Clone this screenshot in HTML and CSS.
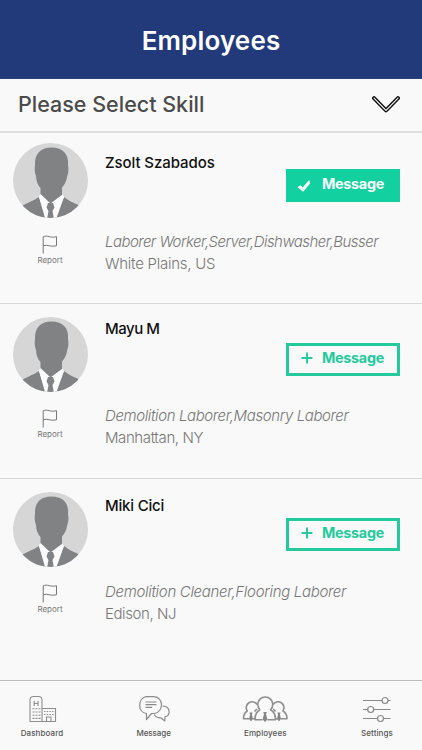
FILE: index.html
```html
<!DOCTYPE html>
<html lang="en">
<head>
<meta charset="utf-8">
<title>Employees</title>
<link rel="stylesheet" href="styles.css">
</head>
<body>
<svg class="defs" aria-hidden="true">
  <defs>
    <clipPath id="round"><circle cx="37.5" cy="37.5" r="37.5"/></clipPath>
    <symbol id="avatar" viewBox="0 0 75 75">
      <g clip-path="url(#round)">
        <rect width="75" height="75" fill="#d6d6d6"/>
        <path d="M26.500 52 L37.500 60 L50 52 L56 75 H22Z" fill="#fbfbfb"/>
        <path d="M22 22 C21.500 11 27 4.500 38.500 4.500 C50 4.500 56 11 55 22 C56 28 55 31 54 34 C53.500 38 51.500 42 49 44.500 L49 54 L37.500 61 L27.500 53 V45 C24.500 42 23 37 23 33 C21.500 29 21.500 26 22 22Z" fill="#808284"/>
        <path d="M26 54 C20 58 14 60 9.500 62.500 V75 H33 L29 63Z M51 54 C55 57 60 60 65.500 62 V75 H42 L47 63Z" fill="#808284"/>
        <path d="M27.500 51 L37.500 60.500 L33.500 64 V75 H32 L26 54Z M49.500 51.500 L37.500 60.500 L41.500 64 V75 H43.500 L51 54Z" fill="#fbfbfb"/>
        <path d="M35 60 H40 L41.500 64.500 L39.500 68 L40.800 75 H34.200 L35.500 68 L33.500 64.500Z" fill="#808284"/>
      </g>
    </symbol>
    <symbol id="flag" viewBox="0 0 16 19">
      <path d="M1.2 18.5 V1.8 C5.5 -.3 8.5 3.5 14.5 1.7 V10.8 C9 12.6 5.5 8.9 1.2 10.8" fill="none" stroke="#777" stroke-width="1"/>
    </symbol>
    <symbol id="plus" viewBox="0 0 12 12">
      <path d="M6 .6 V11.4 M.6 6 H11.4" fill="none" stroke="#24c99c" stroke-width="1.9"/>
    </symbol>
  </defs>
</svg>
<header class="header"><h1 class="title">Employees</h1></header>
<div class="select">
  <span class="select-label">Please Select Skill</span>
  <svg class="chevron" viewBox="0 0 28 17"><path d="M2 2.2 L14 14.4 L26 2.2" fill="none" stroke="#111" stroke-width="4" stroke-linecap="round" stroke-linejoin="round"/><path d="M2 2.2 L14 14.4 L26 2.2" fill="none" stroke="#f9f9f9" stroke-width="1.1" stroke-linecap="round"/></svg>
</div>
<main class="list">
  <article class="row row-first">
    <div class="side">
      <svg class="avatar"><use href="#avatar"/></svg>
      <svg class="flag"><use href="#flag"/></svg>
      <span class="report">Report</span>
    </div>
    <div class="info">
      <div class="top">
        <h2 class="name n1">Zsolt Szabados</h2>
        <div class="button filled"><svg class="check" viewBox="0 0 14 12"><path d="M.5 7.2 L3.4 5.2 L5.7 7.5 L11.6 .6 L12.8 .8 V3.8 L6.2 11.7Z" fill="#fff"/></svg><span class="button-label">Message</span></div>
      </div>
      <p class="skills s1">Laborer Worker,Server,Dishwasher,Busser</p>
      <p class="place p1">White Plains, US</p>
    </div>
  </article>
  <article class="row row-second">
    <div class="side">
      <svg class="avatar"><use href="#avatar"/></svg>
      <svg class="flag"><use href="#flag"/></svg>
      <span class="report">Report</span>
    </div>
    <div class="info">
      <div class="top">
        <h2 class="name n2">Mayu M</h2>
        <div class="button"><svg class="plus"><use href="#plus"/></svg><span class="button-label">Message</span></div>
      </div>
      <p class="skills s2">Demolition Laborer,Masonry Laborer</p>
      <p class="place p2">Manhattan, NY</p>
    </div>
  </article>
  <article class="row row-third">
    <div class="side">
      <svg class="avatar"><use href="#avatar"/></svg>
      <svg class="flag"><use href="#flag"/></svg>
      <span class="report">Report</span>
    </div>
    <div class="info">
      <div class="top">
        <h2 class="name n3">Miki Cici</h2>
        <div class="button"><svg class="plus"><use href="#plus"/></svg><span class="button-label">Message</span></div>
      </div>
      <p class="skills s3">Demolition Cleaner,Flooring Laborer</p>
      <p class="place p3">Edison, NJ</p>
    </div>
  </article>
</main>
<nav class="tabs">
  <div class="tab tab-dashboard">
    <svg class="tab-icon" viewBox="0 0 50 28" fill="none" stroke="#8e8e8e" stroke-width="1.1">
      <path d="M13 26.5 V5 Q13 1.5 16.500 1.500 H21.500 Q25 1.500 25 5 V26.500Z M25 13.500 H38.500 V26.500 H25 M29.500 26.500 V22 H34 V26.500"/>
      <path d="M17.200 6 V11 M21 6 V11 M17.200 8.500 H21" stroke-width="1.200"/>
      <path d="M15.500 13.800 H23.500 M15.500 17 H23.500 M15.500 20.200 H23.500 M15.500 23.400 H23.500" stroke-dasharray="2 1"/>
      <path d="M27 16.500 H37 M27 19.500 H37" stroke-dasharray="1.500 1.200"/>
    </svg>
    <span class="tab-label t1">Dashboard</span>
  </div>
  <div class="tab tab-message">
    <svg class="tab-icon" viewBox="0 0 50 28" fill="none" stroke="#8b8b8b" stroke-width="1.2" stroke-linejoin="round" stroke-linecap="round">
      <path d="M17.500 18.500 C8.500 17.500 8.500 3.500 17 1.700 H25 C35 2 35 17.500 25 18.500 H22.500 L17.500 24.500Z"/>
      <path d="M17 7 H27 M17 9.700 H27 M17 12.400 H22.500"/>
      <path d="M34 11 C41.500 11.500 42 20.500 36 21.800 L35.800 26 L31.700 22.800 C28.500 22.800 26.700 22 25.500 20"/>
    </svg>
    <span class="tab-label t2">Message</span>
  </div>
  <div class="tab tab-employees">
    <svg class="tab-icon" viewBox="0 0 50 28" fill="none" stroke="#8e8e8e" stroke-width="1.600" stroke-linejoin="round">
      <path d="M20 14.800 A7.500 7.500 0 1 1 30.500 14.800 C34 16.500 35.500 20 35.500 24.700 H27.500 M20 14.800 C16.500 16.500 15 20 15 24.700 H22.500"/>
      <path d="M17.200 9.500 A5.500 5.500 0 1 0 7.200 16 C4 18 3.500 21 3.500 23.700 H9.500 M13 23.700 H15 M14.500 16.500 L17 14"/>
      <path d="M33 9.500 A5.500 5.500 0 1 1 43 16 C46.500 18 47 21 47 23.700 H41 M35.500 23.700 H37.500 M35.500 16.500 L33.200 14"/>
      <path d="M23.200 17 H26.800 L26 19 L27.400 24.500 L25 27 L22.600 24.500 L24 19Z M9.400 17.500 H12.600 L11.900 19.500 L13 24 L11 26.300 L9 24 L10.100 19.500Z M37.400 17.500 H40.600 L39.900 19.500 L41 24 L39 26.300 L37 24 L38.100 19.500Z" fill="#858585" stroke="none"/>
    </svg>
    <span class="tab-label t3">Employees</span>
  </div>
  <div class="tab tab-settings">
    <svg class="tab-icon" viewBox="0 0 50 28" fill="#f9f9f9" stroke="#8a8a8a" stroke-width="1.200">
      <path d="M11 5.500 H38.500 M11 14.500 H38.500 M11 23.500 H38.500"/>
      <circle cx="33" cy="5.500" r="3"/><circle cx="18.700" cy="14.500" r="3"/><circle cx="28.500" cy="23.500" r="3"/>
    </svg>
    <span class="tab-label t4">Settings</span>
  </div>
</nav>
</body>
</html>
```
FILE: styles.css
```css
* { box-sizing: border-box; }
body {
  margin: 0;
  width: 422px;
  height: 750px;
  display: flex;
  flex-direction: column;
  background: #f9f9f9;
  font-family: Inter, "Liberation Sans", sans-serif;
  overflow: hidden;
}
.defs { position: absolute; width: 0; height: 0; }
h1, h2, p { margin: 0; white-space: nowrap; }
.header {
  height: 79px;
  background: #233a7a;
  display: flex;
  justify-content: center;
  padding-top: 25px;
  border-bottom: 1px solid #2d4277;
}
.title { color: #fff; font-size: 26px; line-height: 32px; font-weight: 600; letter-spacing: 0.15px; }
.select {
  height: 54px;
  border-bottom: 2px solid #e1e1e1;
  display: flex;
  align-items: center;
  justify-content: space-between;
  padding: 0 22px 2px 18px;
}
.select-label { color: #4b4b4b; font-size: 21.5px; line-height: 28px; font-weight: 500; }
.chevron { width: 28px; height: 17px; }
.list { flex: 1; }
.row { display: flex; gap: 17px; padding: 13px 22px 0 13px; border-bottom: 1px solid #d8d8d8; }
.row-first { height: 171px; padding-top: 10px; }
.row-second { height: 175px; }
.row-third { height: 201px; border-bottom: 0; }
.side { width: 75px; display: flex; flex-direction: column; align-items: center; }
.avatar { width: 75px; height: 75px; }
.flag { width: 16px; height: 19px; margin: 17px 1px 0 0; }
.report { font-size: 8px; line-height: 10px; color: #777; margin: 1px 1px 0 0; }
.info { flex: 1; min-width: 0; display: flex; flex-direction: column; }
.top { height: 88px; display: flex; justify-content: space-between; align-items: flex-start; }
.name { font-size: 15px; line-height: 20px; font-weight: 500; color: #111; }
.n1 { margin-top: 10px; letter-spacing: -0.08px; }
.n2 { margin-top: 2px; letter-spacing: -0.45px; }
.n3 { margin-top: 4px; letter-spacing: -0.2px; }
.button {
  width: 114px;
  height: 33px;
  margin-top: 26px;
  border: 3px solid #24c99c;
  color: #24c99c;
  display: flex;
  align-items: center;
  padding: 0 0 3px 12px;
}
.filled { background: #12d0a0; border-color: #12d0a0; color: #fff; padding-left: 8px; }
.plus { width: 12px; height: 12px; margin-right: 9px; }
.check { width: 14px; height: 12px; margin: 3px 11px 0 0; }
.button-label { font-size: 14.3px; line-height: 20px; font-weight: 700; letter-spacing: -0.25px; }
.skills { font-size: 15px; line-height: 22px; font-weight: 300; font-style: italic; color: #777; }
.place { font-size: 15px; line-height: 22px; font-weight: 300; color: #777; }
.s1 { letter-spacing: -0.54px; }
.s2 { letter-spacing: -0.39px; }
.s3 { letter-spacing: -0.31px; }
.p1 { letter-spacing: -0.26px; }
.p2 { letter-spacing: -0.4px; }
.p3 { letter-spacing: -0.42px; }
.row-third .skills { margin-top: 1px; }
.tabs { height: 70px; border-top: 1px solid #bdbdbd; display: flex; justify-content: space-between; padding: 14px 19px 0 16px; }
.tab { width: 52px; display: flex; flex-direction: column; align-items: center; }
.tab-icon { width: 50px; height: 28px; }
.tab-label { font-size: 8px; line-height: 10px; font-weight: 500; color: #555; margin-top: 5px; letter-spacing: 0.1px; }
.t2 { letter-spacing: -0.05px; }
```
